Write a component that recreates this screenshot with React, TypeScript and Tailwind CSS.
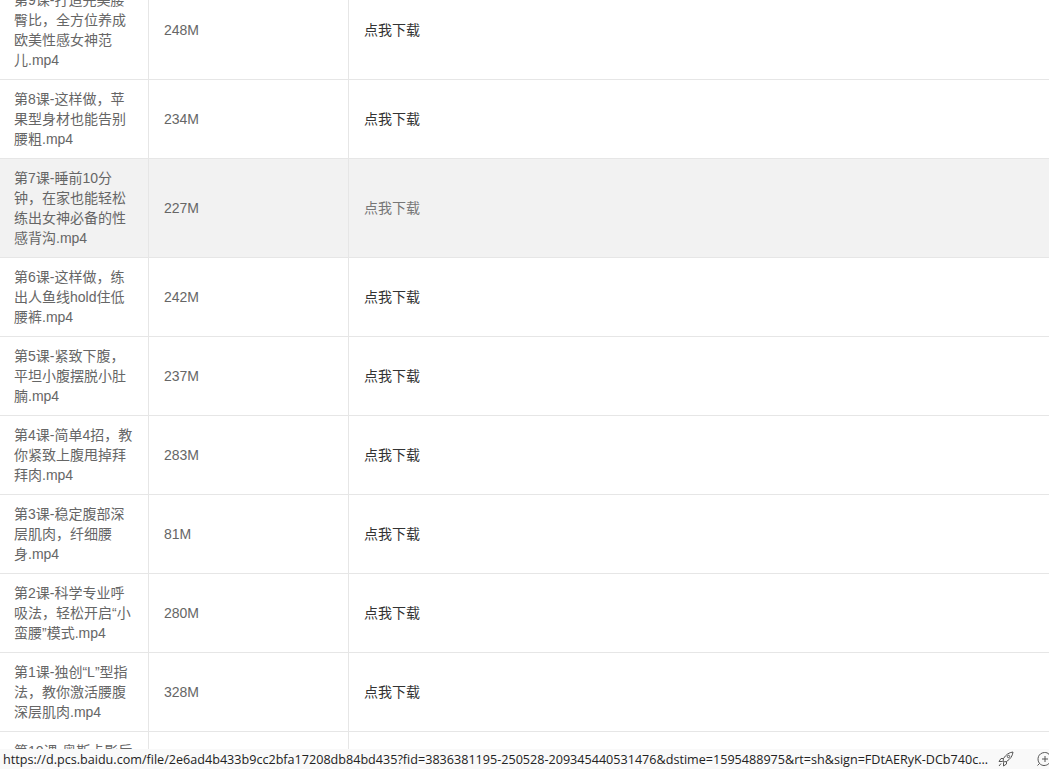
const rows = [
  { name: '第9课-打造完美腰臀比，全方位养成欧美性感女神范儿.mp4', size: '248M' },
  { name: '第8课-这样做，苹果型身材也能告别腰粗.mp4', size: '234M' },
  { name: '第7课-睡前10分钟，在家也能轻松练出女神必备的性感背沟.mp4', size: '227M', hover: true },
  { name: '第6课-这样做，练出人鱼线hold住低腰裤.mp4', size: '242M' },
  { name: '第5课-紧致下腹，平坦小腹摆脱小肚腩.mp4', size: '237M' },
  { name: '第4课-简单4招，教你紧致上腹甩掉拜拜肉.mp4', size: '283M' },
  { name: '第3课-稳定腹部深层肌肉，纤细腰身.mp4', size: '81M' },
  { name: '第2课-科学专业呼吸法，轻松开启“小蛮腰”模式.mp4', size: '280M' },
  { name: '第1课-独创“L”型指法，教你激活腰腹深层肌肉.mp4', size: '328M' },
  { name: '第10课-奥斯卡影后般的性感身材曲线.mp4', size: '256M' },
];

export default function App() {
  return (
    <div className="flex h-[769px] w-[1049px] flex-col overflow-hidden bg-white font-['Liberation_Sans','Noto_Sans_CJK_SC',sans-serif] text-[14px] leading-[20px] text-[#666]">
      <div className="min-h-0 flex-1 overflow-hidden">
        <table className="mt-[-19px] w-full table-fixed border-collapse">
          <colgroup>
            <col className="w-[148px]" />
            <col className="w-[200px]" />
            <col />
          </colgroup>
          <tbody>
            {rows.map((row) => (
              <tr key={row.name} className={row.hover ? 'bg-[#f2f2f2]' : ''}>
                <td className="border-r border-b border-[#e6e6e6] py-[9px] pr-[14px] pl-[14px] align-middle">{row.name}</td>
                <td className="border-r border-b border-[#e6e6e6] px-[15.5px] py-[9px] align-middle">{row.size}</td>
                <td className={`border-b border-[#e6e6e6] px-[15.5px] py-[9px] align-middle ${row.hover ? 'text-[#777]' : 'text-[#333]'}`}>点我下载</td>
              </tr>
            ))}
          </tbody>
        </table>
      </div>
      <div className="flex h-[20px] shrink-0 items-center bg-[#f9f9f9] font-['Open_Sans','Noto_Sans_CJK_SC',sans-serif] text-[12.6px] text-[#222]">
        <span className="ml-[3px] w-[985px] shrink-0 truncate pt-[1px]">https://d.pcs.baidu.com/file/2e6ad4b433b9cc2bfa17208db84bd435?fid=3836381195-250528-209345440531476&amp;dstime=1595488975&amp;rt=sh&amp;sign=FDtAERyK-DCb740c...</span>
        <svg className="ml-[10px] h-[16px] w-[16px] shrink-0" viewBox="0 0 16 16" fill="none" stroke="#555" strokeWidth="1">
          <path d="M5 11 5.500 7.500C8 3.500 11 1.500 15 1 14.500 5 12.500 8 8.500 10.500L5 11Z" />
          <path d="M5.500 7.500H3L1 10.500H4.500M8.500 10.500V13L5.500 15V11.500" />
          <circle cx="10.500" cy="5.500" r="1.200" />
          <path d="M3 12.500 1 15" />
        </svg>
        <svg className="ml-[22px] h-[16px] w-[16px] shrink-0" viewBox="0 0 16 16" fill="none" stroke="#555" strokeWidth="1">
          <path d="M1.500 14.500 3.500 12.500C0.500 8.500 2 2 8.500 1.500 12 1.300 14.800 4 14.800 8 14.800 12 11.500 14.500 8 14.500 6.500 14.500 5 13.900 3.500 12.500" />
          <path d="M9 5v6M6 8h6" />
        </svg>
      </div>
    </div>
  );
}
